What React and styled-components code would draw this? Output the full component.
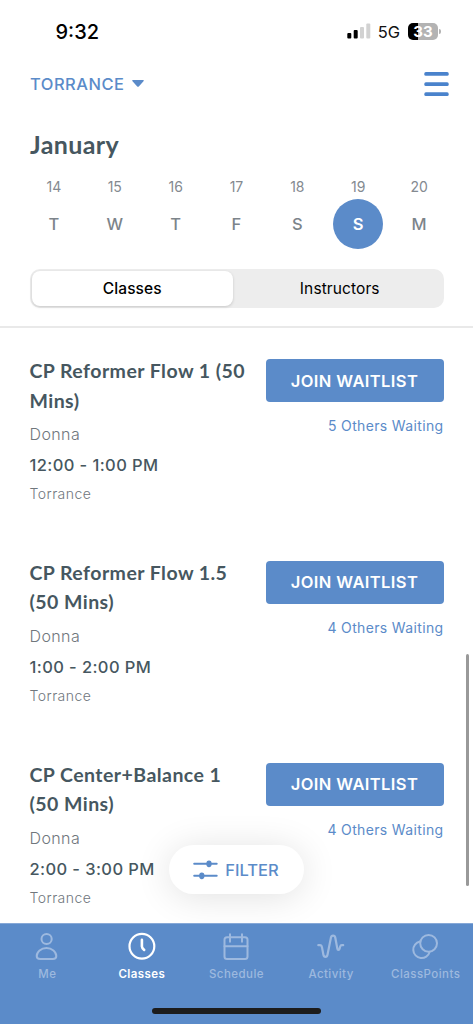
import React from 'react';
import styled, { createGlobalStyle } from 'styled-components';

const blue = '#5b8bc9';
const slate = '#465760';
const grey = '#848a90';

const GlobalStyle = createGlobalStyle`
  * {
    box-sizing: border-box;
  }

  body {
    margin: 0;
    background: #fff;
    font-family: Inter, Roboto, sans-serif;
  }

  button {
    font-family: inherit;
    border: none;
    padding: 0;
    margin: 0;
  }
`;

const Screen = styled.div`
  position: relative;
  display: flex;
  flex-direction: column;
  width: 100%;
  height: 1024px;
  overflow: hidden;
  background: #fff;
`;

const StatusBar = styled.div`
  display: flex;
  align-items: center;
  justify-content: space-between;
  flex: none;
  height: 62px;
  padding: 0 32px 0 55.5px;
`;

const Time = styled.span`
  margin-top: 1px;
  font-size: 20px;
  font-weight: 500;
  letter-spacing: 0;
  color: #000;
`;

const StatusIcons = styled.div`
  display: flex;
  align-items: center;
`;

const Network = styled.span`
  margin: 2px 8px 0 7px;
  font-size: 16.5px;
  letter-spacing: 0;
  color: #111;
`;

const Battery = styled.div`
  display: flex;
  align-items: center;
  justify-content: center;
  width: 30px;
  height: 17px;
  border-radius: 5px;
  background: linear-gradient(to right, #000 33%, #b3b3b3 33%);
  color: #fff;
  font-size: 15px;
  font-weight: 700;
`;

const BatteryTip = styled.div`
  width: 2px;
  height: 5px;
  margin-left: 1px;
  border-radius: 0 2px 2px 0;
  background: #b3b3b3;
`;

const Header = styled.div`
  display: flex;
  align-items: center;
  justify-content: space-between;
  flex: none;
  height: 44px;
  padding: 0 24px 0 30px;
`;

const LocationButton = styled.button`
  display: flex;
  align-items: center;
  gap: 7px;
  background: none;
  color: ${blue};
  font-size: 16.5px;
  font-weight: 500;
  letter-spacing: 0.5px;
`;

const Month = styled.h1`
  flex: none;
  margin: 20px 0 0;
  padding: 0 30px;
  font-family: Lato, sans-serif;
  font-size: 25px;
  font-weight: 700;
  line-height: 36px;
  letter-spacing: 0.4px;
  color: ${slate};
`;

const Week = styled.div`
  display: grid;
  grid-template-columns: repeat(7, 1fr);
  flex: none;
  margin-top: 15px;
  padding: 0 23.5px;
`;

const Day = styled.div`
  display: flex;
  flex-direction: column;
  align-items: center;
`;

const DayNumber = styled.span`
  height: 22px;
  font-size: 14px;
  line-height: 20px;
  color: ${grey};
`;

const DayLetter = styled.span`
  display: flex;
  align-items: center;
  justify-content: center;
  width: 50px;
  height: 50px;
  border-radius: 50%;
  background: ${(props) => (props.$selected ? blue : 'transparent')};
  color: ${(props) => (props.$selected ? '#fff' : '#7c848a')};
  font-size: 16.5px;
  font-weight: ${(props) => (props.$selected ? 600 : 500)};
`;

const Segmented = styled.div`
  display: flex;
  flex: none;
  height: 39px;
  margin: 20px 29.5px 18px;
  padding: 2px;
  border-radius: 10px;
  background: #ededed;
`;

const Segment = styled.button`
  flex: ${(props) => (props.$active ? '0 0 201.500px' : '1')};
  padding-left: ${(props) => (props.$active ? '0' : '5px')};
  border-radius: 8px;
  background: ${(props) => (props.$active ? '#fff' : 'transparent')};
  box-shadow: ${(props) => (props.$active ? '0 1px 3px rgba(0, 0, 0, 0.16)' : 'none')};
  color: #000;
  font-size: 15.5px;
  font-weight: ${(props) => (props.$active ? 500 : 400)};
  letter-spacing: 0.1px;
`;

const ClassList = styled.div`
  flex: 1;
  min-height: 0;
  overflow: hidden;
  border-top: 2px solid #e9e9e9;
  padding: 31px 29.5px 0 29.5px;
`;

const ClassRow = styled.div`
  display: flex;
  justify-content: space-between;
  height: 201.8px;
`;

const ClassInfo = styled.div`
  width: 226px;
`;

const Title = styled.h2`
  margin: -3px 0 0;
  font-family: Lato, sans-serif;
  font-size: 19.5px;
  font-weight: 700;
  line-height: 29.5px;
  letter-spacing: 0.45px;
  color: ${slate};
  white-space: nowrap;
`;

const Instructor = styled.div`
  margin-top: 6px;
  font-size: 16px;
  font-weight: 300;
  line-height: 26px;
  letter-spacing: 0.4px;
  color: #70777d;
`;

const Hours = styled.div`
  margin-top: 4px;
  font-size: 16.5px;
  font-weight: 500;
  line-height: 28px;
  letter-spacing: 0.4px;
  color: ${slate};
`;

const Place = styled.div`
  margin-top: 4px;
  font-size: 14px;
  font-weight: 300;
  line-height: 22px;
  letter-spacing: 0.45px;
  color: #70777d;
`;

const Booking = styled.div`
  display: flex;
  flex-direction: column;
  align-items: flex-end;
`;

const JoinButton = styled.button`
  width: 178px;
  height: 43px;
  border-radius: 4px;
  background: ${blue};
  color: #fff;
  font-size: 16.5px;
  font-weight: 600;
  letter-spacing: 0.4px;
`;

const Waiting = styled.span`
  margin-top: 14px;
  font-size: 14px;
  line-height: 20px;
  letter-spacing: 0.35px;
  color: ${blue};
`;

const ScrollThumb = styled.div`
  position: absolute;
  right: 4px;
  top: 654px;
  width: 3px;
  height: 232px;
  border-radius: 2px;
  background: #999;
`;

const FilterButton = styled.button`
  position: absolute;
  left: 169px;
  bottom: 130px;
  display: flex;
  align-items: center;
  justify-content: center;
  gap: 7px;
  width: 135px;
  height: 49px;
  padding-right: 1px;
  border-radius: 25px;
  background: #fff;
  box-shadow: 0 3px 36px rgba(0, 0, 0, 0.12);
  color: ${blue};
  font-size: 16.5px;
  font-weight: 500;
`;

const TabBar = styled.nav`
  position: relative;
  display: flex;
  flex-direction: column;
  flex: none;
  height: 101px;
  border-top: 1px solid #86a8d7;
  background: ${blue};
`;

const Tabs = styled.div`
  display: grid;
  grid-template-columns: repeat(5, 1fr);
  padding-top: 8px;
`;

const Tab = styled.div`
  display: flex;
  flex-direction: column;
  align-items: center;
  color: ${(props) => (props.$active ? '#fff' : '#9db9df')};
  font-size: 11.5px;
  font-weight: ${(props) => (props.$active ? 600 : 500)};
  line-height: 16px;
  letter-spacing: 0.45px;
  white-space: nowrap;

  svg {
    margin-bottom: 4px;
  }
`;

const HomeIndicator = styled.div`
  width: 169px;
  height: 6px;
  margin: 26px auto 0;
  border-radius: 3px;
  background: #1c1c1c;
`;

const SignalIcon = () => (
  <svg width="24" height="16" viewBox="0 0 24 16">
    <rect x="0.3" y="10" width="4" height="5.5" rx="1" fill="#000" />
    <rect x="6.7" y="7" width="4" height="8.5" rx="1" fill="#000" />
    <rect x="13" y="4" width="4" height="11.5" rx="1" fill="#d2d2d2" />
    <rect x="19.3" y="0.5" width="4" height="15" rx="1" fill="#d2d2d2" />
  </svg>
);

const CaretIcon = () => (
  <svg width="12" height="8" viewBox="0 0 12 8">
    <path d="M1 0h10c.8 0 1 .7.5 1.200L7 6.200c-.6.7-1.400.7-2 0L.5 1.200C0 .7.200 0 1 0z" fill={blue} />
  </svg>
);

const MenuIcon = () => (
  <svg width="25" height="26" viewBox="0 0 25 26" fill="#4a83cc">
    <rect x="0.3" y="1" width="24.4" height="3.8" rx="1.6" />
    <rect x="0.3" y="11.2" width="24.4" height="3.800" rx="1.6" />
    <rect x="0.3" y="21.3" width="24.4" height="3.800" rx="1.6" />
  </svg>
);

const FilterIcon = () => (
  <svg width="25" height="20" viewBox="0 0 25 20" stroke={blue} strokeWidth="2" strokeLinecap="round">
    <path d="M1.200 3.800h22.500M1.200 15.800h22.500" />
    <ellipse cx="16" cy="3.800" rx="1.7" ry="2.400" fill={blue} />
    <ellipse cx="8.800" cy="15.800" rx="1.7" ry="2.400" fill={blue} />
  </svg>
);

const TabIcon = ({ children }) => (
  <svg
    width="30"
    height="30"
    viewBox="0 0 30 30"
    fill="none"
    stroke="currentColor"
    strokeWidth="2"
    strokeLinecap="round"
    strokeLinejoin="round"
  >
    {children}
  </svg>
);

const tabs = [
  {
    label: 'Me',
    icon: (
      <>
        <circle cx="14.6" cy="7" r="5.1" />
        <path d="M8.1 27.1c-2.100 0-3.400-1.200-3.400-3 0-4.500 4.400-8 9.800-8s9.800 3.500 9.800 8c0 1.800-1.300 3-3.400 3z" />
      </>
    ),
  },
  {
    label: 'Classes',
    icon: (
      <>
        <circle cx="14.900" cy="14.300" r="12.400" strokeWidth="2.200" />
        <path d="M14.900 7.900v6.700c0 1 .6 1.900 2.300 3.300" strokeWidth="2.600" />
      </>
    ),
  },
  {
    label: 'Schedule',
    icon: (
      <>
        <rect x="3.500" y="5.200" width="23" height="21.800" rx="2.500" />
        <path d="M3.500 14.200h23M9 2.200v7.500M21 2.200v7.500" />
      </>
    ),
  },
  {
    label: 'Activity',
    icon: (
      <path
        d="M2.300 13.200h1.700c1.400 0 1.700.8 2 2.200l1.400 7.400c.5 2.700 3.600 2.700 4.100 0l3.400-17c.5-2.800 3.900-2.800 4.400 0l2 10.700c.3 1.800 1.900 1.800 2.300.2l.5-2c.3-1.200.8-1.500 1.800-1.500h1.300"
        strokeWidth="2.200"
      />
    ),
  },
  {
    label: 'ClassPoints',
    icon: (
      <>
        <circle cx="17.600" cy="11.300" r="8.400" />
        <path d="M8.900 9.600a8.300 8.300 0 1 0 9.700 10.300" />
      </>
    ),
  },
];

const days = [
  [14, 'T'],
  [15, 'W'],
  [16, 'T'],
  [17, 'F'],
  [18, 'S'],
  [19, 'S'],
  [20, 'M'],
];

const classes = [
  { title: ['CP Reformer Flow 1 (50', 'Mins)'], hours: '12:00 - 1:00 PM', waiting: 5 },
  { title: ['CP Reformer Flow 1.5', '(50 Mins)'], hours: '1:00 - 2:00 PM', waiting: 4 },
  { title: ['CP Center+Balance 1', '(50 Mins)'], hours: '2:00 - 3:00 PM', waiting: 4 },
];

const App = () => {
  return (
    <Screen>
      <GlobalStyle />
      <StatusBar>
        <Time>9:32</Time>
        <StatusIcons>
          <SignalIcon />
          <Network>5G</Network>
          <Battery>33</Battery>
          <BatteryTip />
        </StatusIcons>
      </StatusBar>
      <Header>
        <LocationButton>
          TORRANCE
          <CaretIcon />
        </LocationButton>
        <MenuIcon />
      </Header>
      <Month>January</Month>
      <Week>
        {days.map(([number, letter]) => (
          <Day key={number}>
            <DayNumber>{number}</DayNumber>
            <DayLetter $selected={number === 19}>{letter}</DayLetter>
          </Day>
        ))}
      </Week>
      <Segmented>
        <Segment $active>Classes</Segment>
        <Segment>Instructors</Segment>
      </Segmented>
      <ClassList>
        {classes.map((item) => (
          <ClassRow key={item.hours}>
            <ClassInfo>
              <Title>
                {item.title[0]}
                <br />
                {item.title[1]}
              </Title>
              <Instructor>Donna</Instructor>
              <Hours>{item.hours}</Hours>
              <Place>Torrance</Place>
            </ClassInfo>
            <Booking>
              <JoinButton>JOIN WAITLIST</JoinButton>
              <Waiting>{item.waiting} Others Waiting</Waiting>
            </Booking>
          </ClassRow>
        ))}
      </ClassList>
      <ScrollThumb />
      <FilterButton>
        <FilterIcon />
        FILTER
      </FilterButton>
      <TabBar>
        <Tabs>
          {tabs.map((tab) => (
            <Tab key={tab.label} $active={tab.label === 'Classes'}>
              <TabIcon>{tab.icon}</TabIcon>
              {tab.label}
            </Tab>
          ))}
        </Tabs>
        <HomeIndicator />
      </TabBar>
    </Screen>
  );
};

export default App;
